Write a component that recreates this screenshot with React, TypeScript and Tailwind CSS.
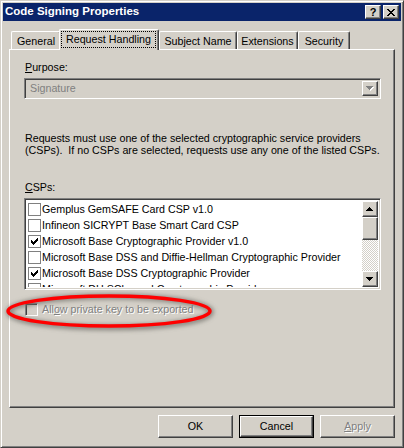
import React from "react";

const raised =
  "border border-t-white border-l-white border-r-[#404040] border-b-[#404040] shadow-[inset_-1px_-1px_0_#808080]";
const sunken =
  "border border-t-[#808080] border-l-[#808080] border-r-white border-b-white shadow-[inset_1px_1px_0_#404040,inset_-1px_-1px_0_#d4d0c8]";

function Check() {
  return (
    <svg width="7" height="7" viewBox="0 0 7 7" className="block">
      <path
        d="M0 2h1v1h1v1h1v-1h1v-1h1v-1h1v-1h1v3h-1v1h-1v1h-1v1h-1v1h-1v-1h-1v-1h-1z"
        fill="#000"
        shapeRendering="crispEdges"
      />
    </svg>
  );
}

function ListRow({ label, checked }: { label: string; checked?: boolean }) {
  return (
    <div className="h-[16px] flex items-center shrink-0 whitespace-nowrap">
      <div className="ml-[1px] w-[13px] h-[13px] border border-[#808080] bg-white flex items-center justify-center shrink-0">
        {checked && <Check />}
      </div>
      <span className="ml-[1px]">{label}</span>
    </div>
  );
}

function Arrow({ down, disabled }: { down?: boolean; disabled?: boolean }) {
  return (
    <svg width="8" height="5" viewBox="0 0 8 5" className="block" shapeRendering="crispEdges">
      {disabled && (
        <path d="M1 1h7v1h-1v1h-1v1h-1v1h-1v-1h-1v-1h-1v-1h-1z" fill="#fff" />
      )}
      <path
        d={down ? "M0 0h7v1h-1v1h-1v1h-1v1h-1v-1h-1v-1h-1v-1h-1z" : "M3 0h1v1h1v1h1v1h1v1h-7v-1h1v-1h1v-1h1z"}
        fill={disabled ? "#808080" : "#000"}
      />
    </svg>
  );
}

function Tab({ label, w }: { label: string; w: string }) {
  return (
    <div
      className={`${w} h-[18px] border-t border-l border-r border-t-white border-l-white border-r-[#404040] shadow-[inset_-1px_0_0_#808080] rounded-tl-[2px] rounded-tr-[2px] flex items-center justify-center leading-none pt-[1px]`}
    >
      {label}
    </div>
  );
}

function Button({
  children,
  isDefault,
}: {
  children: React.ReactNode;
  isDefault?: boolean;
}) {
  if (isDefault) {
    return (
      <div className="w-[75px] h-[23px] border border-black">
        <div className={`${raised} w-full h-full flex items-center justify-center`}>{children}</div>
      </div>
    );
  }
  return (
    <div className={`${raised} w-[75px] h-[23px] flex items-center justify-center`}>{children}</div>
  );
}

export default function App() {
  return (
    <div className="relative w-[404px] h-[448px] bg-[#d4d0c8] font-['Liberation_Sans',Arial,sans-serif] text-[10.7px] text-black overflow-hidden">
      <div className="w-full h-full border border-t-[#d4d0c8] border-l-[#d4d0c8] border-r-[#404040] border-b-[#404040] shadow-[inset_1px_1px_0_#ffffff,inset_-1px_-1px_0_#808080] p-[2px] flex flex-col">
        {/* Title bar */}
        <div className="h-[18px] bg-[#0a246a] flex items-center justify-between pl-[2px] pr-[2px] shrink-0">
          <span className="text-white font-bold text-[11.5px] leading-none">Code Signing Properties</span>
          <div className="flex gap-[2px]">
            <div className={`${raised} w-[16px] h-[14px] bg-[#d4d0c8] flex items-center justify-center font-bold text-[11px] leading-none`}>
              ?
            </div>
            <div className={`${raised} w-[16px] h-[14px] bg-[#d4d0c8] flex items-center justify-center`}>
              <svg width="8" height="7" viewBox="0 0 8 7" shapeRendering="crispEdges">
                <path
                  d="M0 0h2v1h1v1h2v-1h1v-1h2v1h-1v1h-1v1h-1v1h1v1h1v1h1v1h-2v-1h-1v-1h-2v1h-1v1h-2v-1h1v-1h1v-1h1v-1h-1v-1h-1v-1h-1z"
                  fill="#000"
                />
              </svg>
            </div>
          </div>
        </div>

        {/* Body */}
        <div className="flex-1 flex flex-col px-[6px] pt-[8px]">
          {/* Tabs */}
          <div className="h-[20px] flex items-end pl-[2px] shrink-0">
            <Tab label="General" w="w-[50px]" />
            <div className="relative z-10 -ml-[2px] w-[100px] h-[21px] -mb-[1px] bg-[#d4d0c8] border-t border-l border-r border-t-white border-l-white border-r-[#404040] shadow-[inset_-1px_0_0_#808080] rounded-tl-[2px] rounded-tr-[2px] pt-[1px] pl-[1px] pr-[2px] pb-[2px]">
              <div className="w-full h-full border border-dotted border-black flex items-center justify-center leading-none">
                Request Handling
              </div>
            </div>
            <Tab label="Subject Name" w="w-[78px]" />
            <Tab label="Extensions" w="w-[61px]" />
            <Tab label="Security" w="w-[52px]" />
          </div>

          {/* Panel */}
          <div className="h-[359px] shrink-0 border border-t-white border-l-white border-r-[#404040] border-b-[#404040] shadow-[inset_-1px_-1px_0_#808080] pl-[14px] pr-[13px] flex flex-col">
            <div className="mt-[11px] leading-[13px] pl-[1px]">
              <span className="underline">P</span>urpose:
            </div>
            <div className={`${sunken} mt-[4px] h-[21px] flex items-center p-[2px]`}>
              <span className="flex-1 pl-[3px] text-[#808080] leading-none">Signature</span>
              <div className={`${raised} w-[16px] h-full flex items-center justify-center`}>
                <Arrow down disabled />
              </div>
            </div>
            <div className="mt-[33px] leading-[12px] pl-[1px] whitespace-pre">
              {"Requests must use one of the selected cryptographic service providers\n(CSPs).  If no CSPs are selected, requests use any one of the listed CSPs."}
            </div>
            <div className="mt-[25px] leading-[13px] pl-[1px]">
              <span className="underline">C</span>SPs:
            </div>
            <div className={`${sunken} mt-[4px] h-[92px] bg-white p-[2px] flex`}>
              <div className="flex-1 overflow-hidden flex flex-col">
                <ListRow label="Gemplus GemSAFE Card CSP v1.0" />
                <ListRow label="Infineon SICRYPT Base Smart Card CSP" />
                <ListRow label="Microsoft Base Cryptographic Provider v1.0" checked />
                <ListRow label="Microsoft Base DSS and Diffie-Hellman Cryptographic Provider" />
                <ListRow label="Microsoft Base DSS Cryptographic Provider" checked />
                <ListRow label="Microsoft DH SChannel Cryptographic Provider" />
              </div>
              <div className="w-[16px] flex flex-col shrink-0">
                <div className={`${raised} h-[16px] bg-[#d4d0c8] flex items-center justify-center shrink-0`}>
                  <Arrow />
                </div>
                <div className={`${raised} h-[23px] bg-[#d4d0c8] shrink-0`} />
                <div className="flex-1 bg-[repeating-conic-gradient(#ffffff_0%_25%,#d4d0c8_0%_50%)] bg-size-[2px_2px]" />
                <div className={`${raised} h-[16px] bg-[#d4d0c8] flex items-center justify-center shrink-0`}>
                  <Arrow down />
                </div>
              </div>
            </div>
            <div className="mt-[13px] h-[13px] flex items-center">
              <div className={`${sunken} ml-[1px] w-[13px] h-[13px] bg-[#d4d0c8] shrink-0`} />
              <span className="ml-[4px] text-[#808080] [text-shadow:1px_1px_0_#ffffff]">
                All<span className="underline">o</span>w private key to be exported
              </span>
            </div>
          </div>

          {/* Buttons */}
          <div className="mt-[7px] flex justify-end gap-[6px]">
            <Button>OK</Button>
            <Button isDefault>Cancel</Button>
            <Button>
              <span className="text-[#808080] [text-shadow:1px_1px_0_#ffffff]">
                <span className="underline">A</span>pply
              </span>
            </Button>
          </div>
        </div>
      </div>

      {/* Red annotation ellipse */}
      <svg className="absolute left-0 top-0 pointer-events-none" width="404" height="448" viewBox="0 0 404 448">
        <defs>
          <filter id="sh" x="-20%" y="-50%" width="140%" height="200%">
            <feGaussianBlur stdDeviation="2" />
          </filter>
        </defs>
        <ellipse cx="110" cy="312" rx="101" ry="15.5" fill="none" stroke="#6e6c66" strokeOpacity="0.7" strokeWidth="6" filter="url(#sh)" />
        <ellipse cx="109" cy="311" rx="101" ry="15" fill="none" stroke="#ff0000" strokeWidth="3.5" />
      </svg>
    </div>
  );
}
